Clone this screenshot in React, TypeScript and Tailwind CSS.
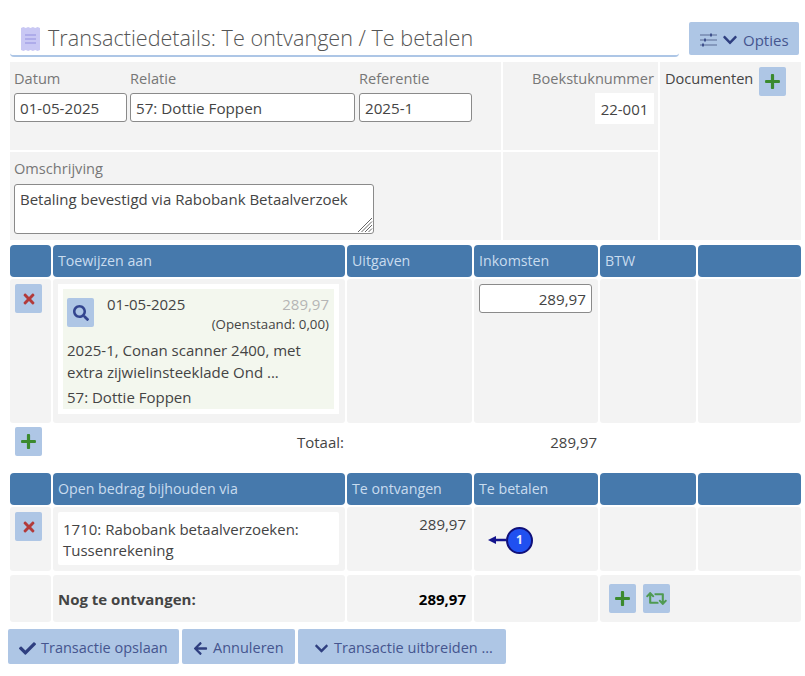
import { FaArrowLeft, FaCheck, FaChevronDown, FaPlus, FaRetweet, FaSearch, FaTimes } from 'react-icons/fa';

const tableCols = 'grid grid-cols-[41px_292px_125px_124px_96px_103px] gap-[2px]';
const inputClass = 'h-[29px] rounded-[3px] border border-[#8a8a8a] bg-white px-[5px] text-[15.2px] text-[#444] outline-none';

function SmallButton({ children, className = '' }: { children: React.ReactNode; className?: string }) {
  return (
    <button className={`flex h-[29px] w-[27px] items-center justify-center rounded-[2px] bg-[#aec6e5] ${className}`}>
      {children}
    </button>
  );
}

function Header({ children, className = '' }: { children?: React.ReactNode; className?: string }) {
  return (
    <div className={`flex h-[32px] items-center rounded-[4px] bg-[#4679ac] px-[5px] text-[14.2px] text-[#c9dcef] ${className}`}>
      {children}
    </div>
  );
}

function ReceiptIcon() {
  return (
    <svg width="19" height="24" viewBox="0 0 19 24" className="shrink-0">
      <path
        d="M0 1 L2.4 0 L4.8 1 L7.1 0 L9.5 1 L11.9 0 L14.2 1 L16.6 0 L19 1 V23 L16.6 24 L14.2 23 L11.9 24 L9.5 23 L7.1 24 L4.8 23 L2.4 24 L0 23 Z"
        fill="#c9c8f4"
      />
      <path d="M4 8h11M4 12h11M4 16h11" stroke="#a5a3e6" strokeWidth="1.5" />
    </svg>
  );
}

function SlidersIcon() {
  return (
    <svg width="17" height="14" viewBox="0 0 17 14" className="shrink-0">
      <path d="M0 2h17M0 7h17M0 12h17" stroke="#5a6a94" strokeWidth="1" />
      <path d="M11 0.5v3M5 5.5v3M3 10.5v3" stroke="#2f3f80" strokeWidth="1.6" />
    </svg>
  );
}

function ActionButton({ icon, label, className }: { icon: React.ReactNode; label: string; className: string }) {
  return (
    <button className={`flex h-[35px] items-center rounded-[2px] bg-[#aec6e5] pt-[3px] text-[14.5px] text-[#45558f] ${className}`}>
      {icon}
      {label}
    </button>
  );
}

export default function App() {
  return (
    <div className="h-[676px] w-[805px] bg-white font-['Open_Sans',sans-serif] text-[15px] text-[#444]">
      <div className="pl-[10px] pt-[22px]">
        <div className="flex items-start">
          <div className="flex h-[35px] w-[669px] items-center gap-[8px] rounded-bl-[4px] rounded-br-[4px] border-b-[2px] border-[#adc6e6] pl-[11px]">
            <ReceiptIcon />
            <h1 className="text-[21.6px] font-light text-[#555]">Transactiedetails: Te ontvangen / Te betalen</h1>
          </div>
          <button className="ml-[10px] flex h-[33px] w-[110px] items-center gap-[5px] rounded-[2px] bg-[#aec6e5] pl-[11px] pt-[3px] text-[15px] text-[#45558f]">
            <SlidersIcon />
            <FaChevronDown className="text-[16px] text-[#2f3f80]" />
            Opties
          </button>
        </div>

        <div className="mt-[5px] grid w-[791px] grid-cols-[491px_155px_141px] grid-rows-[88px_88px] gap-[2px] text-[14.6px] text-[#777]">
          <div className="flex gap-[3px] bg-[#f3f3f3] px-[4px] pt-[5px]">
            <label className="flex w-[113px] flex-col leading-[22px]">
              Datum
              <input readOnly value="01-05-2025" className={`${inputClass} mt-[4px] w-[113px]`} />
            </label>
            <label className="flex w-[225px] flex-col leading-[22px]">
              Relatie
              <input readOnly value="57: Dottie Foppen" className={`${inputClass} mt-[4px] w-[225px]`} />
            </label>
            <label className="ml-[1px] flex w-[113px] flex-col leading-[22px]">
              Referentie
              <input readOnly value="2025-1" className={`${inputClass} mt-[4px] w-[113px]`} />
            </label>
          </div>
          <div className="flex flex-col items-end bg-[#f3f3f3] pr-[4px] pt-[5px] leading-[22px]">
            Boekstuknummer
            <div className="mt-[4px] flex h-[31px] w-[59px] items-center justify-center bg-white text-[15px] text-[#444]">22-001</div>
          </div>
          <div className="row-span-2 flex items-start gap-[6px] bg-[#f3f3f3] pl-[5px] pt-[5px] leading-[22px] text-[#444]">
            Documenten
            <SmallButton>
              <FaPlus className="text-[17px] text-[#3b8a2e]" />
            </SmallButton>
          </div>
          <div className="bg-[#f3f3f3] px-[4px] pt-[5px] leading-[22px]">
            Omschrijving
            <div className="relative mt-[5px] h-[50px] w-[360px]">
              <textarea
                readOnly
                value="Betaling bevestigd via Rabobank Betaalverzoek"
                className="block h-[50px] w-[360px] resize-none rounded-[3px] border border-[#8a8a8a] bg-white px-[5px] py-[3px] text-[15px] text-[#444] outline-none"
              />
              <svg width="16" height="16" viewBox="0 0 16 16" className="absolute bottom-[1px] right-[1px]">
                <path d="M15 1 1 15M15 4.500 4.500 15M15 8 8 15M15 11.500 11.500 15" stroke="#666" strokeWidth="1" />
              </svg>
            </div>
          </div>
          <div className="bg-[#f3f3f3]" />
        </div>

        <div className={`mt-[5px] ${tableCols}`}>
          <Header />
          <Header>Toewijzen aan</Header>
          <Header>Uitgaven</Header>
          <Header>Inkomsten</Header>
          <Header>BTW</Header>
          <Header />

          <div className="h-[144px] rounded-[3px] bg-[#f3f3f3] p-[5px]">
            <SmallButton>
              <FaTimes className="text-[16px] text-[#b23a3a]" />
            </SmallButton>
          </div>
          <div className="rounded-[3px] bg-[#f3f3f3] pb-[5px] pl-[5px] pr-[6px] pt-[5px]">
            <div className="bg-white p-[5px]">
              <div className="bg-[#f3f7ee] px-[4px] pb-[1px] pt-[4px] leading-[22px]">
                <div className="flex">
                  <SmallButton className="mt-[5px]">
                    <FaSearch className="text-[16px] text-[#33458f]" />
                  </SmallButton>
                  <div className="ml-[13px] min-w-0 flex-1 pr-[1px]">
                    <div className="flex justify-between">
                      <span>01-05-2025</span>
                      <span className="text-[#b5b5b5]">289,97</span>
                    </div>
                    <div className="text-right text-[13.3px] leading-[18px]">(Openstaand: 0,00)</div>
                  </div>
                </div>
                <div className="mt-[6px]">2025-1, Conan scanner 2400, met extra zijwielinsteeklade Ond ...</div>
                <div className="mt-[3px]">57: Dottie Foppen</div>
              </div>
            </div>
          </div>
          <div className="rounded-[3px] bg-[#f3f3f3]" />
          <div className="rounded-[3px] bg-[#f3f3f3] p-[5px]">
            <input readOnly value="289,97" className={`${inputClass} w-[113px] text-right`} />
          </div>
          <div className="rounded-[3px] bg-[#f3f3f3]" />
          <div className="rounded-[3px] bg-[#f3f3f3]" />

          <div className="px-[5px] pt-[2px]">
            <SmallButton>
              <FaPlus className="text-[17px] text-[#3b8a2e]" />
            </SmallButton>
          </div>
          <div className="pr-[1px] pt-[6px] text-right">Totaal:</div>
          <div />
          <div className="pr-[1px] pt-[6px] text-right">289,97</div>
        </div>

        <div className={`mt-[17px] ${tableCols}`}>
          <Header />
          <Header>Open bedrag bijhouden via</Header>
          <Header>Te ontvangen</Header>
          <Header>Te betalen</Header>
          <Header />
          <Header />

          <div className="h-[64px] rounded-[3px] bg-[#f3f3f3] p-[5px]">
            <SmallButton>
              <FaTimes className="text-[16px] text-[#b23a3a]" />
            </SmallButton>
          </div>
          <div className="rounded-[3px] bg-[#f3f3f3] pl-[5px] pr-[6px] pt-[5px]">
            <div className="h-[53px] rounded-[2px] bg-white px-[5px] pt-[7px] leading-[21px]">
              1710: Rabobank betaalverzoeken: Tussenrekening
            </div>
          </div>
          <div className="rounded-[3px] bg-[#f3f3f3] pr-[6px] pt-[6px] text-right">289,97</div>
          <div className="flex items-center rounded-[3px] bg-[#f3f3f3] pl-[14px] pt-[2px]">
            <svg width="18" height="10" viewBox="0 0 18 10" className="shrink-0">
              <path d="M0 5 L8 1 V3.800 H18 V6.200 H8 V9 Z" fill="#14148c" />
            </svg>
            <div className="flex h-[27px] w-[27px] shrink-0 items-center justify-center rounded-full border-[2px] border-[#10107a] bg-[#2050f0] text-[12px] font-bold text-[#e8eeff]">
              1
            </div>
          </div>
          <div className="rounded-[3px] bg-[#f3f3f3]" />
          <div className="rounded-[3px] bg-[#f3f3f3]" />
        </div>

        <div className={`mt-[4px] ${tableCols}`}>
          <div className="h-[47px] rounded-[3px] bg-[#f3f3f3]" />
          <div className="flex items-center rounded-[3px] bg-[#f3f3f3] pl-[5px] pt-[2px] font-bold">Nog te ontvangen:</div>
          <div className="flex items-center justify-end rounded-[3px] bg-[#f3f3f3] pr-[6px] pt-[2px] font-bold text-black">289,97</div>
          <div className="rounded-[3px] bg-[#f3f3f3]" />
          <div className="col-span-2 flex gap-[7px] rounded-[3px] bg-[#f3f3f3] pl-[9px] pt-[9px]">
            <SmallButton>
              <FaPlus className="text-[17px] text-[#3b8a2e]" />
            </SmallButton>
            <SmallButton>
              <FaRetweet className="text-[21px] text-[#4f9a52]" />
            </SmallButton>
          </div>
        </div>
      </div>

      <div className="ml-[8px] mt-[7px] flex gap-[3px]">
        <ActionButton className="w-[171px] gap-[5px] pl-[11px]" icon={<FaCheck className="text-[17px] text-[#2f3f80]" />} label="Transactie opslaan" />
        <ActionButton className="w-[113px] gap-[5px] pl-[11px]" icon={<FaArrowLeft className="text-[15px] text-[#2f3f80]" />} label="Annuleren" />
        <ActionButton className="w-[208px] gap-[5px] pl-[16px]" icon={<FaChevronDown className="text-[15px] text-[#2f3f80]" />} label="Transactie uitbreiden ..." />
      </div>
    </div>
  );
}
